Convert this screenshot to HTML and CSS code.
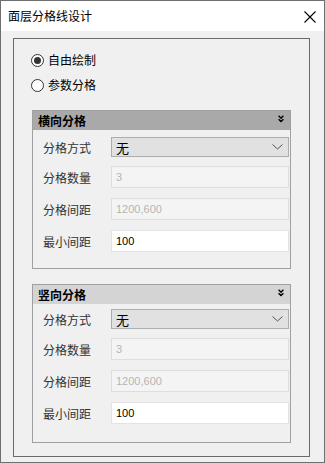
FILE: index.html
```html
<!DOCTYPE html>
<html lang="zh">
<head>
<meta charset="utf-8">
<link rel="stylesheet" href="styles.css">
</head>
<body>
<div class="window">
  <div class="titlebar">
    <span class="title">面层分格线设计</span>
    <svg class="close" width="12" height="12" viewBox="0 0 12 12"><path d="M0.5 0.5 L11.5 11.5 M11.5 0.5 L0.5 11.5" stroke="#000" stroke-width="1.1" fill="none"/></svg>
  </div>
  <div class="content">
    <div class="outer">
      <label class="radio-row"><span class="radio checked"></span><span>自由绘制</span></label>
      <label class="radio-row second"><span class="radio"></span><span>参数分格</span></label>

      <div class="group">
        <div class="ghead dark"><span>横向分格</span>
          <svg width="6" height="8" viewBox="0 0 6 8"><path d="M0.6 0.8 L3 3.2 L5.4 0.8 M0.6 4.2 L3 6.6 L5.4 4.2" stroke="#000" stroke-width="1.4" fill="none"/></svg>
        </div>
        <div class="gbody">
          <div class="row first"><span class="lbl">分格方式</span>
            <div class="select"><span>无</span><svg width="11" height="6" viewBox="0 0 11 6"><path d="M0.5 0.5 L5.5 5 L10.5 0.5" stroke="#555" stroke-width="1" fill="none"/></svg></div>
          </div>
          <div class="row"><span class="lbl">分格数量</span><div class="input disabled">3</div></div>
          <div class="row"><span class="lbl">分格间距</span><div class="input disabled">1200,600</div></div>
          <div class="row"><span class="lbl">最小间距</span><div class="input">100</div></div>
        </div>
      </div>

      <div class="group g2">
        <div class="ghead light"><span>竖向分格</span>
          <svg width="6" height="8" viewBox="0 0 6 8"><path d="M0.6 0.8 L3 3.2 L5.4 0.8 M0.6 4.2 L3 6.6 L5.4 4.2" stroke="#000" stroke-width="1.4" fill="none"/></svg>
        </div>
        <div class="gbody">
          <div class="row first"><span class="lbl">分格方式</span>
            <div class="select"><span>无</span><svg width="11" height="6" viewBox="0 0 11 6"><path d="M0.5 0.5 L5.5 5 L10.5 0.5" stroke="#555" stroke-width="1" fill="none"/></svg></div>
          </div>
          <div class="row"><span class="lbl">分格数量</span><div class="input disabled">3</div></div>
          <div class="row"><span class="lbl">分格间距</span><div class="input disabled">1200,600</div></div>
          <div class="row"><span class="lbl">最小间距</span><div class="input">100</div></div>
        </div>
      </div>
    </div>
  </div>
</div>
</body>
</html>
```
FILE: styles.css
```css
* { box-sizing: border-box; }
html, body { margin: 0; padding: 0; }
body {
  font-family: "Noto Sans CJK SC", "Noto Sans", sans-serif;
  font-size: 12px;
  color: #000;
  background: #f0f0f0;
}
.window {
  width: 325px;
  height: 463px;
  border: 1px solid #6f6f6f;
  background: #f0f0f0;
  display: flex;
  flex-direction: column;
}
.titlebar {
  height: 30px;
  background: #fff;
  display: flex;
  align-items: center;
  justify-content: space-between;
  padding: 0 8px 0 7px;
  flex-shrink: 0;
}
.title { font-size: 12px; line-height: 14px; padding-top: 0; }
.close { display: block; margin-top: 1px; }
.content {
  padding: 7px 14px 0 12px;
}
.outer {
  border: 1px solid #6a6a6a;
  height: 419px;
  padding: 11px 17px 0 17px;
}
.radio-row {
  display: flex;
  align-items: center;
  gap: 4px;
  height: 20px;
  line-height: 20px;
  color: #000;
}
.radio-row.second { margin-top: 5px; }
.radio {
  width: 13px;
  height: 13px;
  border: 1px solid #333;
  border-radius: 50%;
  background: #fff;
  display: flex;
  align-items: center;
  justify-content: center;
}
.radio.checked::after {
  content: "";
  width: 7px;
  height: 7px;
  border-radius: 50%;
  background: #333;
}
.group {
  margin: 15px 1px 0 1px;
  border: 1px solid #a0a0a0;
}
.ghead {
  height: 19px;
  display: flex;
  align-items: center;
  justify-content: space-between;
  padding: 0 6px 0 5px;
  font-weight: bold;
  font-size: 12px;
}
.ghead svg { display: block; margin-top: -3px; }
.ghead.dark { background: #a9a9a9; }
.ghead.light { background: #d4d4d4; }
.gbody {
  padding: 7px 1px 16px 10px;
  display: flex;
  flex-direction: column;
  gap: 10px;
}
.g2 .gbody { padding-top: 5px; padding-bottom: 18px; }
.row {
  display: flex;
  align-items: center;
}
.row.first { margin-bottom: -1px; }
.lbl {
  width: 68px;
  color: #333;
  font-size: 12px;
}
.select {
  width: 178px;
  height: 20px;
  background: #e1e1e1;
  border: 1px solid #adadad;
  display: flex;
  align-items: center;
  justify-content: space-between;
  padding: 0 5px 0 4px;
  font-size: 13px;
}
.select svg { display: block; }
.input {
  width: 178px;
  height: 22px;
  background: #fff;
  border: 1px solid #e3e3e3;
  padding: 0 4px;
  display: flex;
  align-items: center;
  font-family: "Liberation Sans", Arial, sans-serif;
  font-size: 11px;
  color: #000;
}
.input.disabled {
  background: #f4f4f4;
  border-color: #dedede;
  color: #b4b4b4;
}
```
